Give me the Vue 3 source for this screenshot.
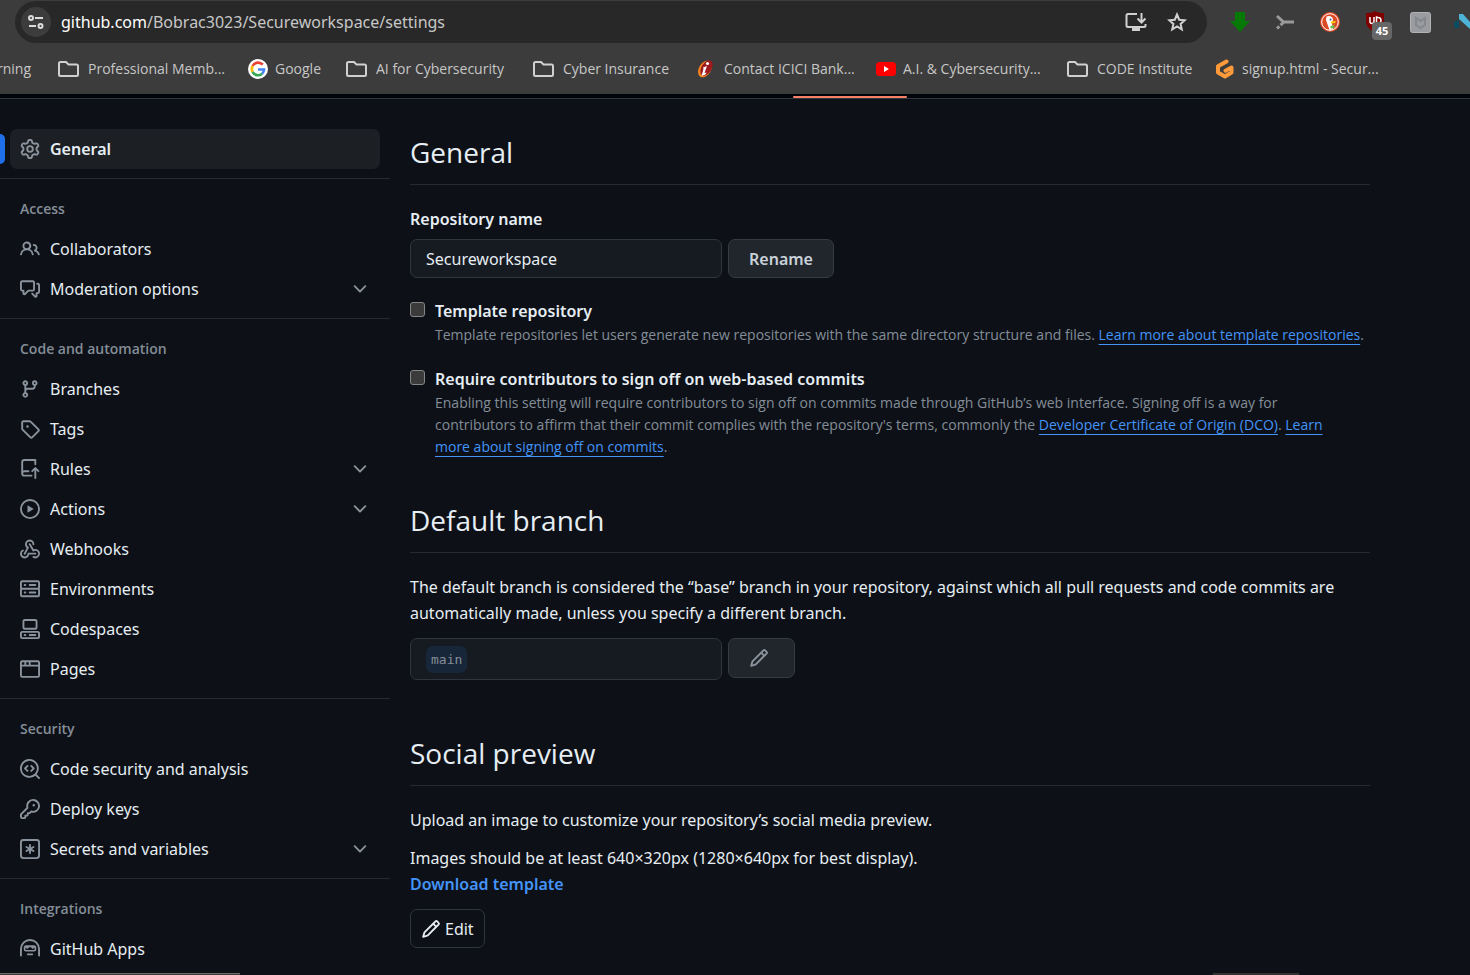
<script setup>
import { ref } from 'vue'

const repoName = ref('Secureworkspace')
const isTemplate = ref(false)
const requireSignoff = ref(false)

const bookmarks = [
  { label: 'rning', icon: 'none' },
  { label: 'Professional Memb...', icon: 'folder' },
  { label: 'Google', icon: 'google' },
  { label: 'AI for Cybersecurity', icon: 'folder' },
  { label: 'Cyber Insurance', icon: 'folder' },
  { label: 'Contact ICICI Bank...', icon: 'icici' },
  { label: 'A.I. & Cybersecurity...', icon: 'youtube' },
  { label: 'CODE Institute', icon: 'folder' },
  { label: 'signup.html - Secur...', icon: 'gitpod' }
]

const icons = {
  gear: 'M8 0a8.2 8.2 0 0 1 .701.031C9.444.095 9.99.645 10.16 1.29l.288 1.107c.018.066.079.158.212.224.231.114.454.243.668.386.123.082.233.09.299.071l1.103-.303c.644-.176 1.392.021 1.82.63.27.385.506.792.704 1.218.315.675.111 1.422-.364 1.891l-.814.806c-.049.048-.098.147-.088.294.016.257.016.515 0 .772-.01.147.038.246.088.294l.814.806c.475.469.679 1.216.364 1.891a7.977 7.977 0 0 1-.704 1.217c-.428.61-1.176.807-1.82.63l-1.102-.302c-.067-.019-.177-.011-.3.071a5.909 5.909 0 0 1-.668.386c-.133.066-.194.158-.211.224l-.29 1.106c-.168.646-.715 1.196-1.458 1.26a8.006 8.006 0 0 1-1.402 0c-.743-.064-1.289-.614-1.458-1.26l-.289-1.106c-.018-.066-.079-.158-.212-.224a5.738 5.738 0 0 1-.668-.386c-.123-.082-.233-.09-.299-.071l-1.103.303c-.644.176-1.392-.021-1.82-.63a8.12 8.12 0 0 1-.704-1.218c-.315-.675-.111-1.422.363-1.891l.815-.806c.05-.048.098-.147.088-.294a6.214 6.214 0 0 1 0-.772c.01-.147-.038-.246-.088-.294l-.815-.806C.635 6.045.431 5.298.746 4.623a7.92 7.92 0 0 1 .704-1.217c.428-.61 1.176-.807 1.82-.63l1.102.302c.067.019.177.011.3-.071.214-.143.437-.272.668-.386.133-.066.194-.158.211-.224l.29-1.106C6.009.645 6.556.095 7.299.03 7.53.01 7.764 0 8 0Zm-.571 1.525c-.036.003-.108.036-.137.146l-.289 1.105c-.147.561-.549.967-.998 1.189-.173.086-.34.183-.5.29-.417.278-.97.423-1.529.27l-1.103-.303c-.109-.03-.175.016-.195.045-.22.312-.412.644-.573.99-.014.031-.021.11.059.19l.815.806c.411.406.562.957.53 1.456a4.709 4.709 0 0 0 0 .582c.032.499-.119 1.05-.53 1.456l-.815.806c-.081.08-.073.159-.059.19.162.346.353.677.573.989.02.03.085.076.195.046l1.102-.303c.56-.153 1.113-.008 1.53.27.161.107.328.204.501.29.447.222.85.629.997 1.189l.289 1.105c.029.109.101.143.137.146a6.6 6.6 0 0 0 1.142 0c.036-.003.108-.036.137-.146l.289-1.105c.147-.561.549-.967.998-1.189.173-.086.34-.183.5-.29.417-.278.97-.423 1.529-.27l1.103.303c.109.029.175-.016.195-.045.22-.313.411-.644.573-.99.014-.031.021-.11-.059-.19l-.815-.806c-.411-.406-.562-.957-.53-1.456a4.709 4.709 0 0 0 0-.582c-.032-.499.119-1.05.53-1.456l.815-.806c.081-.08.073-.159.059-.19a6.464 6.464 0 0 0-.573-.989c-.02-.03-.085-.076-.195-.046l-1.102.303c-.56.153-1.113.008-1.53-.27a4.44 4.44 0 0 0-.501-.29c-.447-.222-.85-.629-.997-1.189l-.289-1.105c-.029-.11-.101-.143-.137-.146a6.6 6.6 0 0 0-1.142 0ZM11 8a3 3 0 1 1-6 0 3 3 0 0 1 6 0ZM9.5 8a1.5 1.5 0 1 0-3.001.001A1.5 1.5 0 0 0 9.5 8Z',
  people: 'M2 5.5a3.5 3.5 0 1 1 5.898 2.549 5.508 5.508 0 0 1 3.034 4.084.75.75 0 1 1-1.482.235 4 4 0 0 0-7.9 0 .75.75 0 0 1-1.482-.236A5.507 5.507 0 0 1 3.102 8.05 3.493 3.493 0 0 1 2 5.5ZM11 4a3.001 3.001 0 0 1 2.22 5.018 5.01 5.01 0 0 1 2.56 3.012.749.749 0 0 1-.885.954.752.752 0 0 1-.549-.514 3.507 3.507 0 0 0-2.522-2.372.75.75 0 0 1-.574-.73v-.352a.75.75 0 0 1 .416-.672A1.5 1.5 0 0 0 11 5.5.75.75 0 0 1 11 4Zm-5.5-.5a2 2 0 1 0-.001 3.999A2 2 0 0 0 5.5 3.5Z',
  discussion: 'M1.75 1h8.5c.966 0 1.75.784 1.75 1.75v5.5A1.75 1.75 0 0 1 10.25 10H7.061l-2.574 2.573A1.458 1.458 0 0 1 2 11.543V10h-.25A1.75 1.75 0 0 1 0 8.25v-5.5C0 1.784.784 1 1.75 1ZM1.5 2.75v5.5c0 .138.112.25.25.25h1a.75.75 0 0 1 .75.75v2.19l2.72-2.72a.749.749 0 0 1 .53-.22h3.5a.25.25 0 0 0 .25-.25v-5.5a.25.25 0 0 0-.25-.25h-8.5a.25.25 0 0 0-.25.25Zm13 2a.25.25 0 0 0-.25-.25h-.5a.75.75 0 0 1 0-1.5h.5c.966 0 1.75.784 1.75 1.75v5.5A1.75 1.75 0 0 1 14.25 12H14v1.543a1.458 1.458 0 0 1-2.487 1.03L9.22 12.28a.749.749 0 0 1 .326-1.275.749.749 0 0 1 .734.215l2.22 2.22v-2.19a.75.75 0 0 1 .75-.75h1a.25.25 0 0 0 .25-.25Z',
  branch: 'M9.5 3.25a2.25 2.25 0 1 1 3 2.122V6A2.5 2.5 0 0 1 10 8.5H6a1 1 0 0 0-1 1v1.128a2.251 2.251 0 1 1-1.5 0V5.372a2.25 2.25 0 1 1 1.5 0v1.836A2.493 2.493 0 0 1 6 7h4a1 1 0 0 0 1-1v-.628A2.25 2.25 0 0 1 9.5 3.25Zm-6 0a.75.75 0 1 0 1.5 0 .75.75 0 0 0-1.5 0Zm8.25-.75a.75.75 0 1 0 0 1.5.75.75 0 0 0 0-1.5ZM4.25 12a.75.75 0 1 0 0 1.5.75.75 0 0 0 0-1.5Z',
  tag: 'M1 7.775V2.75C1 1.784 1.784 1 2.75 1h5.025c.464 0 .91.184 1.238.513l6.25 6.25a1.75 1.75 0 0 1 0 2.474l-5.026 5.026a1.75 1.75 0 0 1-2.474 0l-6.25-6.25A1.752 1.752 0 0 1 1 7.775Zm1.5 0c0 .066.026.13.073.177l6.25 6.25a.25.25 0 0 0 .354 0l5.025-5.025a.25.25 0 0 0 0-.354l-6.25-6.25a.25.25 0 0 0-.177-.073H2.75a.25.25 0 0 0-.25.25ZM6 5a1 1 0 1 1 0 2 1 1 0 0 1 0-2Z',
  rules: 'M1 2.5A2.5 2.5 0 0 1 3.5 0h8.75a.75.75 0 0 1 .75.75v3.5a.75.75 0 0 1-1.5 0V1.5h-8a1 1 0 0 0-1 1v6.708A2.493 2.493 0 0 1 3.5 9h3.25a.75.75 0 0 1 0 1.5H3.5a1 1 0 0 0 0 2h5.75a.75.75 0 0 1 0 1.5H3.5A2.5 2.5 0 0 1 1 11.5v-9Zm13.23 7.79h-.001l-1.224-1.224v6.184a.75.75 0 0 1-1.5 0V9.066L10.28 10.29a.75.75 0 0 1-1.06-1.061l2.505-2.504a.75.75 0 0 1 1.06 0L15.29 9.23a.751.751 0 0 1-.018 1.042.751.751 0 0 1-1.042.018Z',
  play: 'M8 0a8 8 0 1 1 0 16A8 8 0 0 1 8 0ZM1.5 8a6.5 6.5 0 1 0 13 0 6.5 6.5 0 0 0-13 0Zm4.879-2.773 4.264 2.559a.25.25 0 0 1 0 .428l-4.264 2.559A.25.25 0 0 1 6 10.559V5.442a.25.25 0 0 1 .379-.215Z',
  webhook: 'M5.5 4.25a2.25 2.25 0 0 1 4.5 0 .75.75 0 0 0 1.5 0 3.75 3.75 0 1 0-6.14 2.889l-2.272 4.258a.75.75 0 0 0 1.324.706L7 7.25a.75.75 0 0 0-.309-1.015A2.25 2.25 0 0 1 5.5 4.25Z M7.364 3.607a.75.75 0 0 1 1.03.257l2.608 4.349a3.75 3.75 0 1 1-.628 6.785.75.75 0 0 1 .752-1.299 2.25 2.25 0 1 0-.033-3.88.75.75 0 0 1-1.03-.256L7.107 4.636a.75.75 0 0 1 .257-1.03Z M2.9 8.776A.75.75 0 0 1 2.625 9.8 2.25 2.25 0 1 0 6 11.75a.75.75 0 0 1 .75-.751h5.5a.75.75 0 0 1 0 1.5H7.425a3.751 3.751 0 1 1-5.55-3.998.75.75 0 0 1 1.024.274Z',
  server: 'M1.75 1h12.5c.966 0 1.75.784 1.75 1.75v4c0 .372-.116.717-.314 1 .198.283.314.628.314 1v4a1.75 1.75 0 0 1-1.75 1.75H1.75A1.75 1.75 0 0 1 0 12.75v-4c0-.358.109-.707.314-1a1.739 1.739 0 0 1-.314-1v-4C0 1.784.784 1 1.75 1ZM1.5 2.75v4c0 .138.112.25.25.25h12.5a.25.25 0 0 0 .25-.25v-4a.25.25 0 0 0-.25-.25H1.75a.25.25 0 0 0-.25.25Zm.25 5.75a.25.25 0 0 0-.25.25v4c0 .138.112.25.25.25h12.5a.25.25 0 0 0 .25-.25v-4a.25.25 0 0 0-.25-.25ZM7 4.75A.75.75 0 0 1 7.75 4h4.5a.75.75 0 0 1 0 1.5h-4.5A.75.75 0 0 1 7 4.75ZM7.75 10h4.5a.75.75 0 0 1 0 1.5h-4.5a.75.75 0 0 1 0-1.5ZM3 4.75A.75.75 0 0 1 3.75 4h.5a.75.75 0 0 1 0 1.5h-.5A.75.75 0 0 1 3 4.75ZM3.75 10h.5a.75.75 0 0 1 0 1.5h-.5a.75.75 0 0 1 0-1.5Z',
  codespaces: 'M0 11.25c0-.966.784-1.75 1.75-1.75h12.5c.966 0 1.75.784 1.75 1.75v3A1.75 1.75 0 0 1 14.25 16H1.75A1.75 1.75 0 0 1 0 14.25Zm2-9.5C2 .784 2.784 0 3.75 0h8.5C13.216 0 14 .784 14 1.75v5a1.75 1.75 0 0 1-1.75 1.75h-8.5A1.75 1.75 0 0 1 2 6.75Zm1.75-.25a.25.25 0 0 0-.25.25v5c0 .138.112.25.25.25h8.5a.25.25 0 0 0 .25-.25v-5a.25.25 0 0 0-.25-.25Zm-2 9.5a.25.25 0 0 0-.25.25v3c0 .138.112.25.25.25h12.5a.25.25 0 0 0 .25-.25v-3a.25.25 0 0 0-.25-.25Z M7 12.75a.75.75 0 0 1 .75-.75h4.5a.75.75 0 0 1 0 1.5h-4.5a.75.75 0 0 1-.75-.75Zm-4 0a.75.75 0 0 1 .75-.75h.5a.75.75 0 0 1 0 1.5h-.5a.75.75 0 0 1-.75-.75Z',
  browser: 'M0 2.75C0 1.784.784 1 1.75 1h12.5c.966 0 1.75.784 1.75 1.75v10.5A1.75 1.75 0 0 1 14.25 15H1.75A1.75 1.75 0 0 1 0 13.25ZM14.5 6h-13v7.25c0 .138.112.25.25.25h12.5a.25.25 0 0 0 .25-.25Zm-6-3.5v2h6V2.75a.25.25 0 0 0-.25-.25ZM5 2.5v2h2v-2Zm-3.25 0a.25.25 0 0 0-.25.25V4.5h2v-2Z',
  codescan: 'M8.47 4.97a.75.75 0 0 0 0 1.06L9.94 7.5 8.47 8.97a.75.75 0 1 0 1.06 1.06l2-2a.75.75 0 0 0 0-1.06l-2-2a.75.75 0 0 0-1.06 0ZM6.53 6.03a.75.75 0 0 0-1.06-1.06l-2 2a.75.75 0 0 0 0 1.06l2 2a.75.75 0 1 0 1.06-1.06L5.06 7.5l1.47-1.47Z M12.246 13.307a7.501 7.501 0 1 1 1.06-1.06l2.474 2.473a.749.749 0 0 1-.326 1.275.749.749 0 0 1-.734-.215ZM1.5 7.5a6.002 6.002 0 0 0 3.608 5.504 6.002 6.002 0 0 0 6.486-1.117.748.748 0 0 1 .292-.293A6 6 0 1 0 1.5 7.5Z',
  key: 'M10.5 0a5.499 5.499 0 1 1-1.288 10.848l-.932.932a.749.749 0 0 1-.53.22H7v.75a.749.749 0 0 1-.22.53l-.5.5a.749.749 0 0 1-.53.22H5v.75a.749.749 0 0 1-.22.53l-.5.5a.749.749 0 0 1-.53.22h-2A1.75 1.75 0 0 1 0 14.25v-2c0-.199.079-.389.22-.53l4.932-4.932A5.5 5.5 0 0 1 10.5 0Zm-4 5.5c-.001.431.069.86.205 1.269a.75.75 0 0 1-.181.768L1.5 12.56v1.69c0 .138.112.25.25.25h1.69l.06-.06v-1.19a.75.75 0 0 1 .75-.75h1.19l.06-.06v-1.19a.75.75 0 0 1 .75-.75h1.19l1.023-1.025a.75.75 0 0 1 .768-.18A4 4 0 1 0 6.5 5.5ZM11 6a1 1 0 1 1 0-2 1 1 0 0 1 0 2Z',
  asterisk: 'M0 2.75A2.75 2.75 0 0 1 2.75 0h10.5A2.75 2.75 0 0 1 16 2.75v10.5A2.75 2.75 0 0 1 13.25 16H2.75A2.75 2.75 0 0 1 0 13.25ZM2.75 1.5c-.69 0-1.25.56-1.25 1.25v10.5c0 .69.56 1.25 1.25 1.25h10.5c.69 0 1.25-.56 1.25-1.25V2.75c0-.69-.56-1.25-1.25-1.25Z M8 4a.75.75 0 0 1 .75.75V6.7l1.69-.975a.75.75 0 0 1 .75 1.3L9.5 8l1.69.976a.75.75 0 0 1-.75 1.298L8.75 9.3v1.951a.75.75 0 0 1-1.5 0V9.299l-1.69.976a.75.75 0 0 1-.75-1.3L6.5 8l-1.69-.975a.75.75 0 0 1 .75-1.3l1.69.976V4.75A.75.75 0 0 1 8 4Z',
  hubot: 'M0 8a8 8 0 1 1 16 0v5.25a.75.75 0 0 1-1.5 0V8a6.5 6.5 0 1 0-13 0v5.25a.75.75 0 0 1-1.5 0Zm5.5 4.25a.75.75 0 0 1 .75-.75h3.5a.75.75 0 0 1 0 1.5h-3.5a.75.75 0 0 1-.75-.75ZM3 6.75C3 5.784 3.784 5 4.75 5h6.5c.966 0 1.75.784 1.75 1.75v1.5A1.75 1.75 0 0 1 11.25 10h-6.5A1.75 1.75 0 0 1 3 8.25Zm1.3.1v1.3c0 .35.2.6.55.6h6.300c.35 0 .55-.25.55-.6v-1.300L10.200 8 8.700 6.600H7.300L5.800 8Z',
  pencil: 'M11.013 1.427a1.75 1.75 0 0 1 2.474 0l1.086 1.086a1.75 1.75 0 0 1 0 2.474l-8.61 8.61c-.21.21-.47.364-.756.445l-3.251.93a.75.75 0 0 1-.927-.928l.929-3.25c.081-.286.235-.547.445-.758l8.61-8.61Zm.176 4.823L9.75 4.81l-6.286 6.287a.253.253 0 0 0-.064.108l-.558 1.953 1.953-.558a.253.253 0 0 0 .108-.064Zm1.238-3.763a.25.25 0 0 0-.354 0L10.811 3.75l1.439 1.44 1.263-1.263a.25.25 0 0 0 0-.354Z',
  chevron: 'M12.78 5.22a.749.749 0 0 1 0 1.06l-4.25 4.25a.749.749 0 0 1-1.06 0L3.22 6.28a.749.749 0 1 1 1.06-1.06L8 8.939l3.72-3.719a.749.749 0 0 1 1.06 0Z'
}

const groups = [
  {
    title: 'Access',
    items: [
      { label: 'Collaborators', icon: 'people' },
      { label: 'Moderation options', icon: 'discussion', expandable: true }
    ]
  },
  {
    title: 'Code and automation',
    items: [
      { label: 'Branches', icon: 'branch' },
      { label: 'Tags', icon: 'tag' },
      { label: 'Rules', icon: 'rules', expandable: true },
      { label: 'Actions', icon: 'play', expandable: true },
      { label: 'Webhooks', icon: 'webhook' },
      { label: 'Environments', icon: 'server' },
      { label: 'Codespaces', icon: 'codespaces' },
      { label: 'Pages', icon: 'browser' }
    ]
  },
  {
    title: 'Security',
    items: [
      { label: 'Code security and analysis', icon: 'codescan' },
      { label: 'Deploy keys', icon: 'key' },
      { label: 'Secrets and variables', icon: 'asterisk', expandable: true }
    ]
  },
  {
    title: 'Integrations',
    items: [{ label: 'GitHub Apps', icon: 'hubot' }]
  }
]
</script>

<template>
  <div class="window">
    <header class="chrome">
      <div class="toolbar">
        <div class="omnibox">
          <button class="site-info" aria-label="View site information">
            <svg width="16" height="14" viewBox="0 0 16 14" fill="none" stroke="#dcdcdc" stroke-width="2">
              <circle cx="3" cy="3" r="2" />
              <path d="M7 3H15M1 11H8" />
              <circle cx="12.500" cy="11" r="2" />
            </svg>
          </button>
          <div class="url"><span class="host">github.com</span>/Bobrac3023/Secureworkspace/settings</div>
          <button class="chrome-btn" aria-label="Install app">
            <svg width="22" height="20" viewBox="0 0 22 20" fill="none" stroke="#d0d0d0" stroke-width="2">
              <path d="M12 2H3a1.500 1.500 0 0 0-1.500 1.500v10A1.500 1.500 0 0 0 3 15h16a1.500 1.500 0 0 0 1.500-1.500V12" />
              <path d="M7 17.500h8" stroke-width="3" />
              <path d="M16.500 1v9M12.500 6.500l4 4 4-4" />
            </svg>
          </button>
          <button class="chrome-btn" aria-label="Bookmark this tab">
            <svg width="20" height="20" viewBox="0 0 20 20" fill="none" stroke="#d0d0d0" stroke-width="2">
              <path d="M10 2.500l2.200 5.200 5.600.5-4.200 3.700 1.200 5.500L10 14.500l-4.800 2.900 1.200-5.500-4.200-3.700 5.600-.5z" />
            </svg>
          </button>
        </div>
        <div class="extensions">
          <button class="ext" aria-label="Downloader">
            <svg width="20" height="20" viewBox="0 0 20 20"><path fill="#067806" d="M5 0h10v9h5L10 20 0 9h5z" /></svg>
          </button>
          <button class="ext" aria-label="Branch extension">
            <svg width="18" height="16" viewBox="0 0 18 16" fill="none" stroke="#9a9a9a" stroke-width="3">
              <path d="M1 2l6.500 6H18M8 8l-3.500 3.200M3.300 12.300L1 14.500" />
            </svg>
          </button>
          <button class="ext" aria-label="DuckDuckGo">
            <svg width="20" height="20" viewBox="0 0 20 20">
              <circle cx="10" cy="10" r="10" fill="#de4a26" />
              <circle cx="10" cy="10" r="8.300" fill="none" stroke="#fff" stroke-width="1" />
              <path d="M6.500 4.500c3-1.500 6.500 0 6.500 3.500l-1 3 1 6.500-3.500.5L6 8z" fill="#fff" />
              <circle cx="10.500" cy="7.500" r=".9" fill="#2d4f8e" />
              <path d="M11 9.500l5-.5-1 2-4 .5z" fill="#fdd20a" />
              <path d="M10.500 14l4-1v3l-4 .5z" fill="#65bc46" />
            </svg>
          </button>
          <button class="ext shield" aria-label="uBlock, 45 blocked">
            <svg width="20" height="22" viewBox="0 0 20 22">
              <path d="M10 0c3 2 6 2 9 2v8c0 6-5 9-9 12-4-3-9-6-9-12V2c3 0 6 0 9-2z" fill="#800000" />
              <path d="M5 6v4.500a2 2 0 0 0 4 0V6M11.500 6v6.500h1.500a3 3 0 0 0 0-6z" fill="none" stroke="#fff" stroke-width="1.500" />
            </svg>
            <span class="badge">45</span>
          </button>
          <button class="ext" aria-label="Security extension">
            <svg width="21" height="21" viewBox="0 0 21 21">
              <rect x=".5" y=".5" width="20" height="20" rx="2" fill="#9a9c9f" stroke="#b2b3b5" />
              <path d="M6 6l4.500 3L15 6v7l-4.500 3L6 13z" fill="none" stroke="#85888c" stroke-width="2" />
            </svg>
          </button>
          <button class="ext" aria-label="Notes extension">
            <svg width="22" height="16" viewBox="0 0 22 16">
              <path d="M0 8l5-2v8H2a2 2 0 0 1-2-2z" fill="#084c61" />
              <path d="M5 0h4l13 15h-6L5 5z" fill="#4db4d7" />
            </svg>
          </button>
        </div>
      </div>

      <nav class="bookmarks" aria-label="Bookmarks">
        <a v-for="b in bookmarks" :key="b.label" href="#" class="bookmark" :class="b.icon">
          <span v-if="b.icon !== 'none'" class="favicon">
            <svg v-if="b.icon === 'folder'" width="21" height="16" viewBox="0 0 21 16" fill="none" stroke="#d0d0d0" stroke-width="2">
              <path d="M1 2.500A1.500 1.500 0 0 1 2.500 1H8l2.500 2.500h8A1.500 1.500 0 0 1 20 5v8.500a1.500 1.500 0 0 1-1.500 1.500h-16A1.500 1.500 0 0 1 1 13.500z" />
            </svg>
            <svg v-else-if="b.icon === 'google'" width="20" height="20" viewBox="0 0 20 20">
              <circle cx="10" cy="10" r="10" fill="#fff" />
              <g fill="none" stroke-width="2.600">
                <path d="M14.800 5.700A6.200 6.200 0 0 0 4.600 7" stroke="#ea4335" />
                <path d="M4.600 7a6.200 6.200 0 0 0 0 6" stroke="#fbbc05" />
                <path d="M4.600 13a6.200 6.200 0 0 0 9.500 1.700" stroke="#34a853" />
                <path d="M14.100 14.700a6.200 6.200 0 0 0 2-4.200H10" stroke="#4285f4" />
              </g>
            </svg>
            <svg v-else-if="b.icon === 'icici'" width="17" height="18" viewBox="0 0 17 18">
              <ellipse cx="8" cy="9" rx="6" ry="9" transform="rotate(32 8 9)" fill="#f58220" />
              <ellipse cx="9.500" cy="8" rx="5" ry="8.500" transform="rotate(32 9.500 8)" fill="#9b1b1e" />
              <path d="M6 7.500l4-1.500-2.500 7 2-.5-1 2-4 1.500L6.500 9z" fill="#fff" />
              <circle cx="10.500" cy="3.500" r="1.600" fill="#fff" />
            </svg>
            <svg v-else-if="b.icon === 'youtube'" width="20" height="14" viewBox="0 0 20 14">
              <rect width="20" height="14" rx="3.500" fill="#f00" />
              <path d="M8 4l5 3-5 3z" fill="#fff" />
            </svg>
            <svg v-else width="20" height="20" viewBox="0 0 20 20" fill="none" stroke="#ff9a3a" stroke-width="4" stroke-linejoin="round">
              <path d="M11.500 2.500L3 7.300v6.200l7 4 6.500-4V8.500l-6 3.300" stroke-linecap="round" />
            </svg>
          </span>
          <span class="bookmark-label">{{ b.label }}</span>
        </a>
      </nav>
    </header>
    <div class="tab-strip"><span class="active-tab"></span></div>

    <div class="page">
      <nav class="sidebar" aria-label="Repository settings">
        <a href="#" class="nav-item selected" aria-current="page">
          <svg class="icon" viewBox="0 0 16 16"><path :d="icons.gear" /></svg>
          <span>General</span>
        </a>
        <section v-for="g in groups" :key="g.title" class="group">
          <h3>{{ g.title }}</h3>
          <template v-for="item in g.items" :key="item.label">
            <button v-if="item.expandable" class="nav-item" aria-expanded="false">
              <svg class="icon" viewBox="0 0 16 16"><path :d="icons[item.icon]" /></svg>
              <span>{{ item.label }}</span>
              <svg class="icon chevron" viewBox="0 0 16 16"><path :d="icons.chevron" /></svg>
            </button>
            <a v-else href="#" class="nav-item">
              <svg class="icon" viewBox="0 0 16 16"><path fill-rule="evenodd" :d="icons[item.icon]" /></svg>
              <span>{{ item.label }}</span>
            </a>
          </template>
        </section>
      </nav>

      <main class="content">
        <section>
          <h2>General</h2>
          <label class="field-label" for="repo-name">Repository name</label>
          <div class="row">
            <input id="repo-name" v-model="repoName" class="box" type="text" />
            <button class="btn rename">Rename</button>
          </div>
          <div class="option">
            <input id="template" v-model="isTemplate" type="checkbox" />
            <div>
              <label for="template">Template repository</label>
              <p>Template repositories let users generate new repositories with the same directory structure and files. <a href="#">Learn more about template repositories</a>.</p>
            </div>
          </div>
          <div class="option">
            <input id="signoff" v-model="requireSignoff" type="checkbox" />
            <div>
              <label for="signoff">Require contributors to sign off on web-based commits</label>
              <p>Enabling this setting will require contributors to sign off on commits made through GitHub’s web interface. Signing off is a way for<br />contributors to affirm that their commit complies with the repository's terms, commonly the <a href="#">Developer Certificate of Origin (DCO)</a>. <a href="#">Learn<br />more about signing off on commits</a>.</p>
            </div>
          </div>
        </section>

        <section class="branch-section">
          <h2>Default branch</h2>
          <p class="text">The default branch is considered the “base” branch in your repository, against which all pull requests and code commits are automatically made, unless you specify a different branch.</p>
          <div class="row">
            <div class="box branch-box"><code>main</code></div>
            <button class="btn edit-branch" aria-label="Switch default branch">
              <svg class="icon" viewBox="0 0 16 16"><path :d="icons.pencil" /></svg>
            </button>
          </div>
        </section>

        <section class="social-section">
          <h2>Social preview</h2>
          <p class="text">Upload an image to customize your repository’s social media preview.</p>
          <p class="text">Images should be at least 640×320px (1280×640px for best display).<br /><a href="#" class="download">Download template</a></p>
          <button class="edit">
            <svg class="icon" viewBox="0 0 16 16"><path :d="icons.pencil" /></svg>
            <span>Edit</span>
          </button>
        </section>
      </main>
    </div>
    <div class="status-edge"></div>
    <div class="scroll-edge"></div>
  </div>
</template>

<style>
body {
  background: #0d1117;
}
</style>

<style scoped>
* {
  box-sizing: border-box;
}
.window {
  position: relative;
  display: flex;
  flex-direction: column;
  height: 100vh;
  overflow: hidden;
  background: #0d1117;
  color: #e6edf3;
  font: 16px/26px "Noto Sans", "Open Sans", sans-serif;
}
button {
  margin: 0;
  padding: 0;
  border: 0;
  background: none;
  color: inherit;
  font: inherit;
}
a {
  text-decoration: none;
  color: inherit;
}
h2,
h3,
p {
  margin: 0;
}
svg {
  display: block;
  flex: none;
}

/* Browser chrome */
.chrome {
  flex: none;
  height: 94px;
  background: #3c3c3c;
  color: #c7c7c7;
}
.toolbar {
  display: flex;
  align-items: center;
  height: 44px;
  padding: 1px 0 1px 15px;
  overflow: hidden;
}
.omnibox {
  display: flex;
  flex: 1;
  align-items: center;
  gap: 20px;
  height: 42px;
  padding: 0 20px 0 6px;
  border-radius: 21px;
  background: #282828;
}
.site-info {
  display: flex;
  align-items: center;
  justify-content: center;
  width: 30px;
  height: 30px;
  border-radius: 50%;
  background: #3c3c3c;
}
.url {
  flex: 1;
  margin-left: -10px;
}
.host {
  color: #fff;
}
.extensions {
  display: flex;
  flex: none;
  align-items: center;
  gap: 15px;
  width: 263px;
  padding-left: 18px;
}
.ext {
  display: flex;
  flex: none;
  align-items: center;
  justify-content: center;
  width: 30px;
  height: 30px;
}
.shield {
  position: relative;
}
.badge {
  position: absolute;
  top: 15px;
  left: 12px;
  width: 20px;
  height: 18px;
  border-radius: 4px;
  background: #666;
  color: #fff;
  font-size: 11px;
  font-weight: 700;
  line-height: 18px;
  text-align: center;
}
.bookmarks {
  display: grid;
  grid-template-columns: 58px 190px 98px 187px 164px 179px 191px 148px 1fr;
  align-items: center;
  height: 50px;
  overflow: hidden;
}
.bookmark {
  display: flex;
  align-items: center;
  font-family: "Open Sans", sans-serif;
  font-size: 14px;
  white-space: nowrap;
}
.bookmark.none {
  justify-content: flex-end;
  padding-right: 27px;
}
.favicon {
  display: flex;
  flex: none;
  width: 27px;
}
.folder .favicon {
  width: 30px;
}
.tab-strip {
  display: flex;
  flex: none;
  justify-content: center;
  align-items: flex-end;
  height: 5px;
  padding: 0 0 0 230px;
  border-bottom: 1px solid #30363d;
  background: #010409;
}
.active-tab {
  width: 114px;
  height: 2px;
  border-radius: 1px;
  background: #f78166;
}

/* Settings page */
.page {
  display: grid;
  flex: 1;
  grid-template-columns: 390px 1fr;
  min-height: 0;
}
.sidebar {
  padding-top: 30px;
}
.nav-item {
  position: relative;
  display: flex;
  align-items: center;
  gap: 10px;
  width: calc(100% - 20px);
  height: 40px;
  margin: 0 10px;
  padding: 0 10px;
  border-radius: 7px;
  text-align: left;
}
.icon {
  width: 20px;
  height: 20px;
  fill: #8b949e;
}
.chevron {
  margin-left: auto;
}
.selected {
  margin-bottom: 9px;
  background: #1c2024;
  font-weight: 600;
}
.selected::before {
  content: "";
  position: absolute;
  top: 5px;
  left: -10px;
  width: 5px;
  height: 30px;
  border-radius: 0 5px 5px 0;
  background: #1f6feb;
}
.group {
  padding: 10px 0 9px;
  border-top: 1px solid #262b32;
}
.group h3 {
  height: 40px;
  padding-left: 20px;
  color: #848d97;
  font-family: "Open Sans", sans-serif;
  font-size: 14px;
  font-weight: 600;
  line-height: 40px;
}
.content {
  padding: 30px 100px 0 20px;
}
h2 {
  margin-bottom: 21px;
  padding-bottom: 9px;
  border-bottom: 1px solid #262b32;
  font-family: "Open Sans", sans-serif;
  font-size: 28px;
  font-weight: 400;
  line-height: 46px;
}
.field-label {
  display: block;
  margin-bottom: 7px;
  font-weight: 600;
}
.row {
  display: flex;
  gap: 6px;
}
.box {
  width: 312px;
  height: 39px;
  padding: 0 15px;
  border: 1px solid #30363d;
  border-radius: 7px;
  background: #161b22;
  color: #e6edf3;
  font: inherit;
}
.btn {
  display: flex;
  align-items: center;
  justify-content: center;
  border: 1px solid #363b42;
  border-radius: 7px;
  background: #21262d;
  color: #c9d1d9;
  font-weight: 600;
}
.rename {
  width: 106px;
}
.option {
  display: flex;
  gap: 10px;
  margin-top: 20px;
}
.option input {
  flex: none;
  width: 15px;
  height: 15px;
  margin: 4px 0 0;
  border: 1px solid #858585;
  border-radius: 3px;
  background: #3b3b3b;
  appearance: none;
}
.option label {
  display: block;
  font-weight: 600;
}
.option p {
  color: #848d97;
  font-family: "Open Sans", sans-serif;
  font-size: 14px;
  line-height: 22px;
  white-space: nowrap;
}
.option a {
  color: #4493f8;
  text-decoration: underline;
  text-decoration-thickness: 1px;
  text-underline-offset: 4px;
  text-decoration-skip-ink: none;
}
.branch-section {
  margin-top: 39px;
}
.text {
  margin-bottom: 12px;
}
.branch-box {
  display: flex;
  align-items: center;
  height: 42px;
}
code {
  padding: 0 5px;
  border-radius: 7px;
  background: #182639;
  color: #848d97;
  font: 13px/27px "DejaVu Sans Mono", monospace;
}
.edit-branch {
  width: 67px;
  height: 40px;
  padding-right: 5px;
}
.social-section {
  margin-top: 50px;
}
.download {
  color: #4493f8;
  font-weight: 600;
}
.edit {
  display: flex;
  align-items: center;
  gap: 4px;
  height: 39px;
  padding: 0 10px;
  border: 1px solid #30363d;
  border-radius: 7px;
}
.edit .icon {
  fill: #e6edf3;
}

/* Browser overlays along the bottom edge */
.status-edge {
  position: absolute;
  bottom: 0;
  left: 0;
  width: 240px;
  height: 2px;
  border-top: 1px solid #6b6b6b;
  background: #3c3c3c;
}
.scroll-edge {
  position: absolute;
  right: 171px;
  bottom: 0;
  width: 86px;
  height: 2px;
  background: #333;
}
</style>
